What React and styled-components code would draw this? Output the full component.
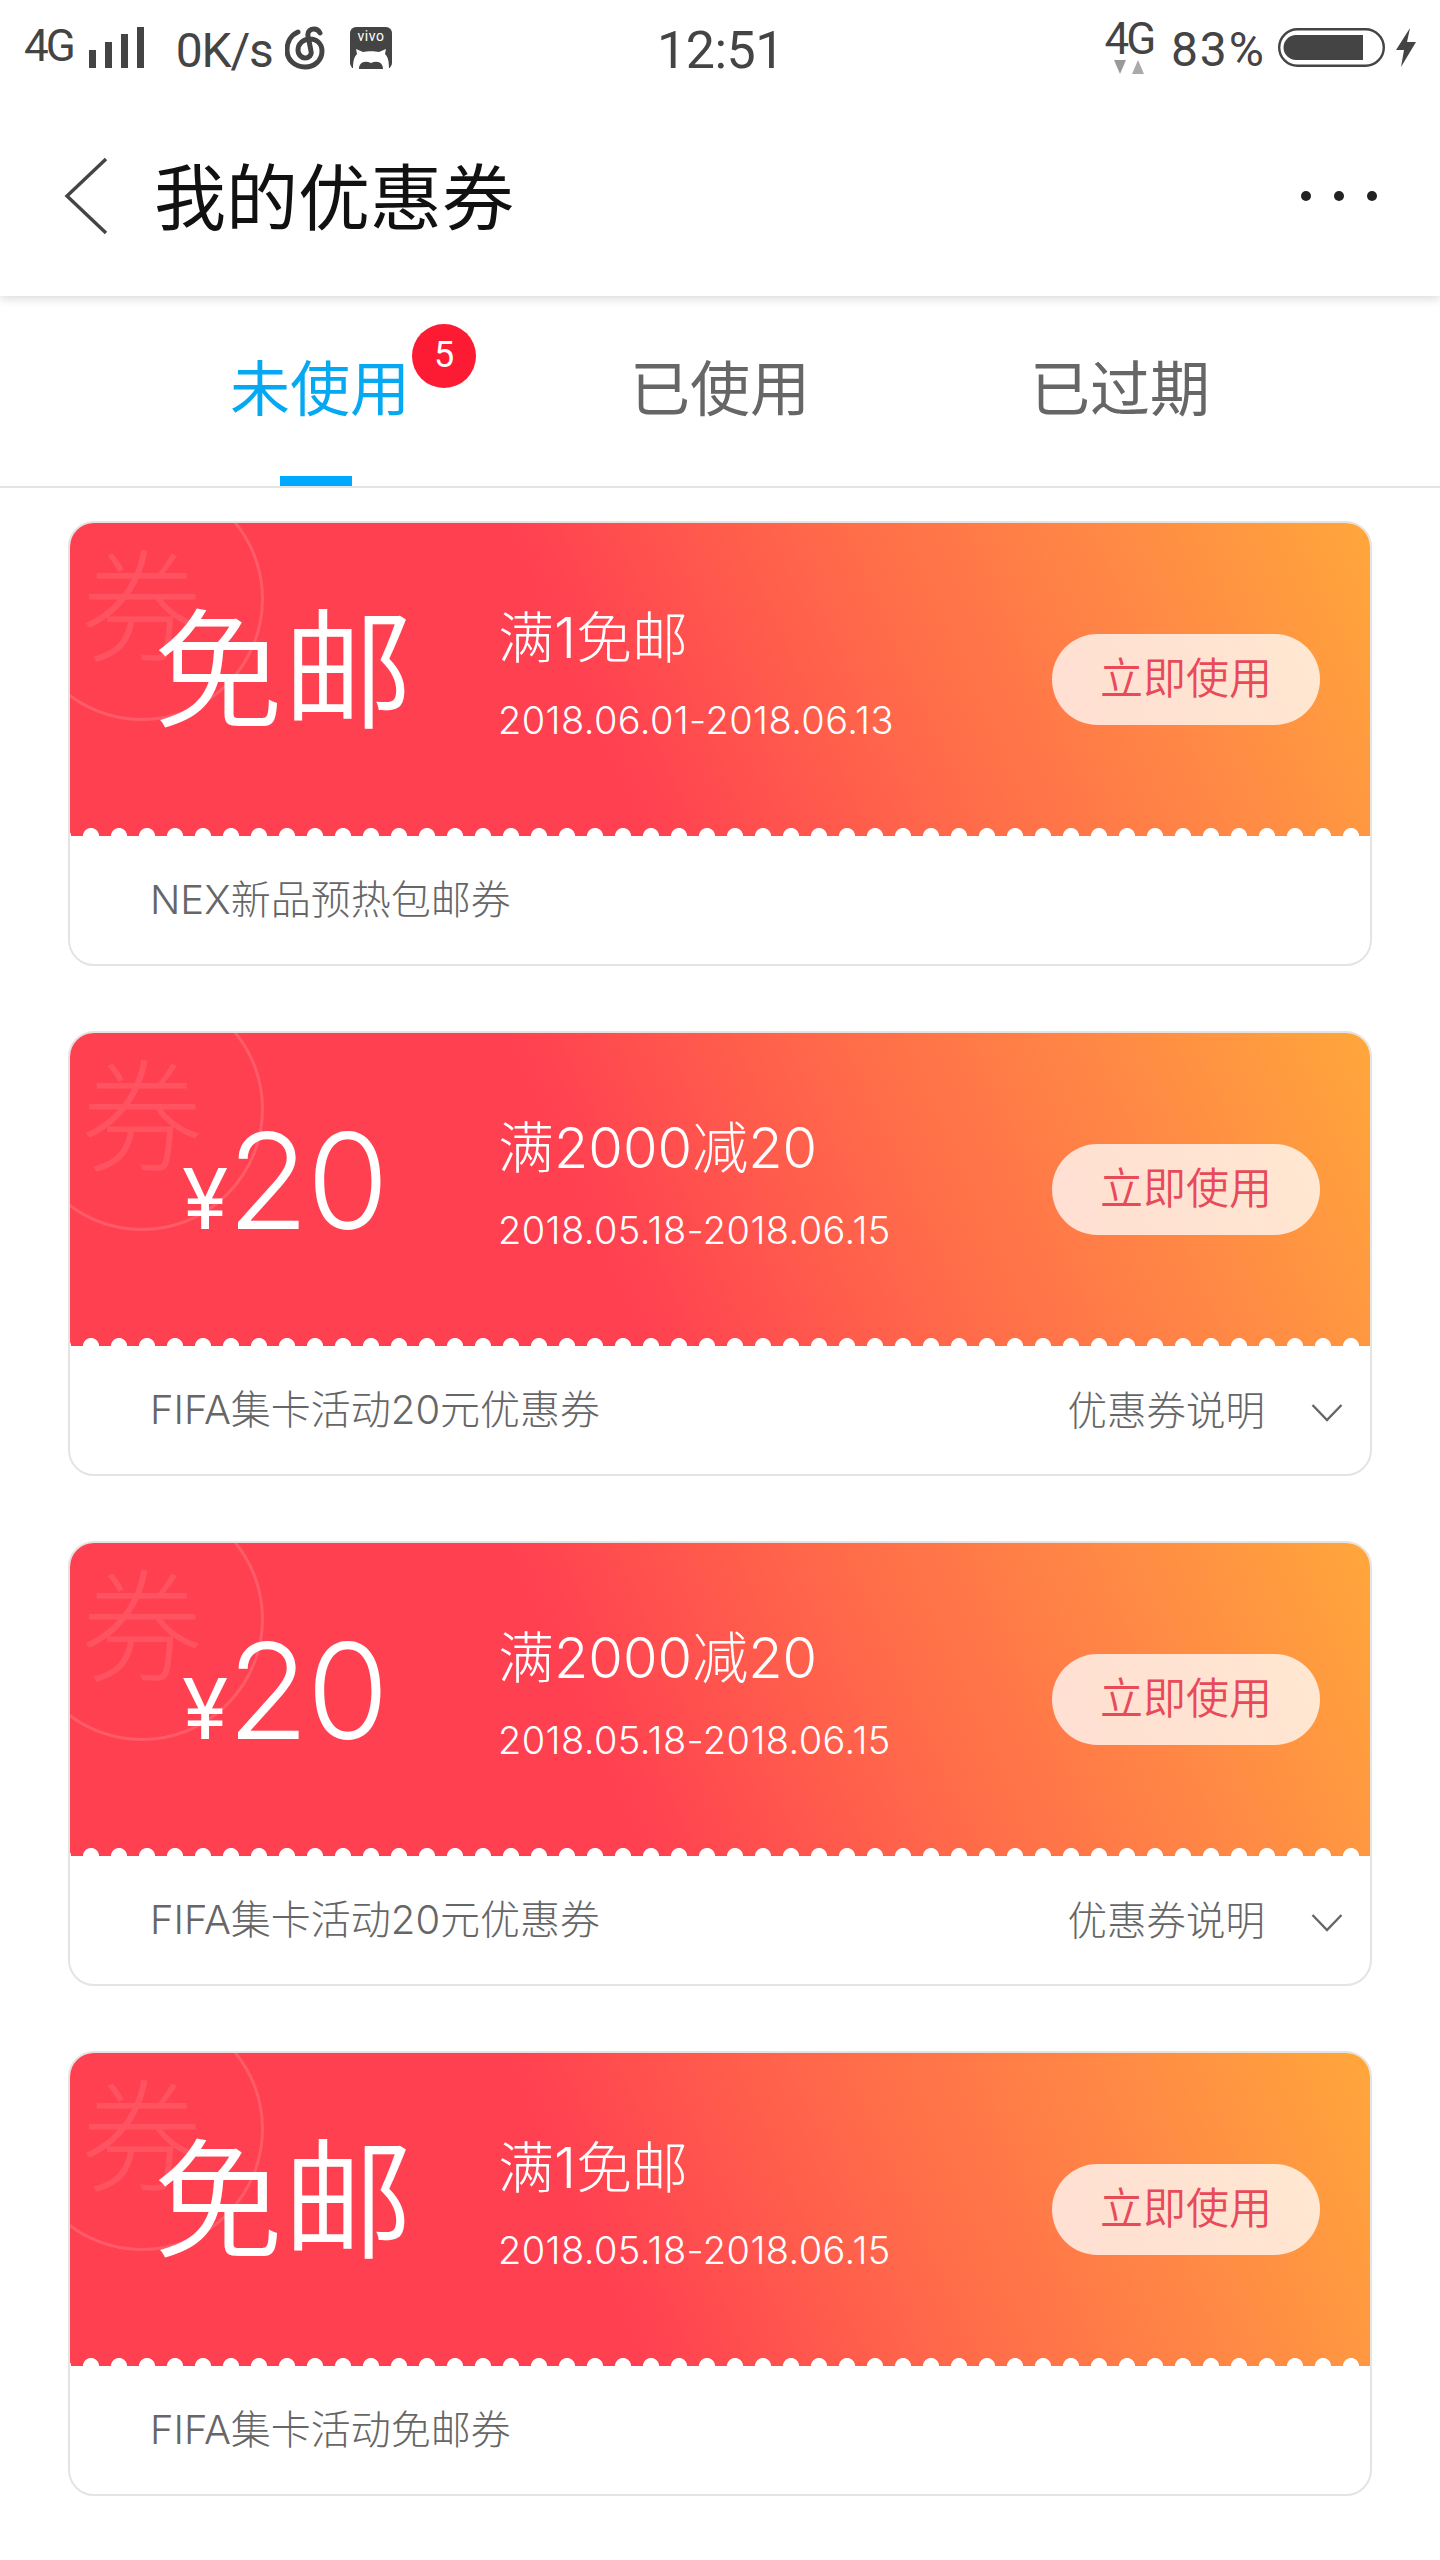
import React from 'react';
import styled, { createGlobalStyle } from 'styled-components';

const GlobalStyle = createGlobalStyle`
  html, body { margin: 0; padding: 0; background: #fff; }
  body { font-family: Roboto, "Noto Sans CJK SC", sans-serif; }
`;

const Page = styled.div`
  width: 1440px;
  height: 2560px;
  overflow: hidden;
  background: #fff;
`;

const Header = styled.header`
  position: relative;
  height: 296px;
  background: #fff;
  box-shadow: 0 3px 9px rgba(0, 0, 0, 0.14);
`;

const StatusBar = styled.div`
  height: 96px;
  padding: 0 23px 0 24px;
  display: grid;
  grid-template-columns: 1fr auto 1fr;
  align-items: start;
  color: #444;
`;

const StatusLeft = styled.div`
  display: flex;
  align-items: flex-start;
`;

const StatusRight = styled.div`
  display: flex;
  justify-content: flex-end;
  align-items: flex-start;
`;

const NetType = styled.span`
  font-size: 44px;
  line-height: 44px;
  letter-spacing: -3px;
  margin-top: ${p => p.$top}px;
`;

const Speed = styled.span`
  font-size: 48px;
  line-height: 48px;
  letter-spacing: -1.2px;
  margin: 27px 0 0 ${p => p.$left}px;
`;

const Clock = styled.span`
  font-size: 52px;
  line-height: 52px;
  letter-spacing: -0.5px;
  margin-top: 25px;
`;

const Percent = styled.span`
  font-size: 48px;
  line-height: 46px;
  letter-spacing: 2px;
  margin: 27px 12px 0 17px;
`;

const NetStack = styled.div`
  display: flex;
  flex-direction: column;
  align-items: center;
  width: 50px;
`;

const StatusIcon = styled.svg`
  display: block;
  flex: none;
  margin: ${p => p.$margin};
`;

const Nav = styled.div`
  height: 200px;
  padding: 0 63px 0 64px;
  display: flex;
  align-items: center;
`;

const BackIcon = styled.svg`
  display: block;
  margin: 0 46px 0 0;
`;

const Title = styled.h1`
  flex: 1;
  margin: 8px 0 0;
  font-size: 72px;
  line-height: 80px;
  font-weight: 400;
  color: #111;
`;

const Dots = styled.div`
  display: flex;
  gap: 23px;
`;

const Dot = styled.i`
  display: block;
  width: 10px;
  height: 10px;
  border-radius: 50%;
  background: #222;
`;

const Tabs = styled.nav`
  height: 190px;
  display: flex;
  justify-content: center;
  border-bottom: 2px solid #e4e4e4;
  box-sizing: content-box;
`;

const Tab = styled.div`
  position: relative;
  width: ${p => p.$width}px;
  padding-top: 57px;
  text-align: center;
  font-size: 60px;
  line-height: 76px;
  color: ${p => (p.$active ? '#06a8f2' : '#666')};
  ${p => p.$active && `
    &::after {
      content: '';
      position: absolute;
      left: 50%;
      bottom: 0;
      width: 72px;
      height: 10px;
      margin-left: -40px;
      background: #00a9ff;
    }
  `}
`;

const Badge = styled.span`
  position: absolute;
  left: 292px;
  top: 28px;
  width: 64px;
  height: 64px;
  border-radius: 50%;
  background: #fc1b32;
  color: #fff;
  font-family: Roboto, sans-serif;
  font-size: 36px;
  line-height: 62px;
  text-align: center;
`;

const List = styled.main`
  padding: 33px 68px 0;
  display: flex;
  flex-direction: column;
  gap: 65px;
`;

const Card = styled.article`
  height: 445px;
  box-sizing: border-box;
  border: 2px solid #e6e4e3;
  border-radius: 26px;
  overflow: hidden;
  display: flex;
  flex-direction: column;
  background: #fff;
  font-family: Inter, "Noto Sans CJK SC", sans-serif;
`;

const Ticket = styled.div`
  position: relative;
  height: 313px;
  overflow: hidden;
  display: flex;
  flex-direction: column;
  background: linear-gradient(66deg, #ff4051 0%, #ff4051 40%, #ff6a4a 62%, #ff8a45 82%, #ffa73b 100%);
`;

const Ring = styled.div`
  position: absolute;
  left: -50px;
  top: -46px;
  width: 238px;
  height: 238px;
  border: 3px solid rgba(255, 255, 255, 0.14);
  border-radius: 50%;
  display: flex;
  align-items: center;
  justify-content: center;
  font-family: "Noto Sans CJK SC", sans-serif;
  font-size: 122px;
  line-height: 122px;
  font-weight: 300;
  color: rgba(255, 255, 255, 0.1);
`;

const TicketBody = styled.div`
  position: relative;
  flex: 1;
  display: flex;
  align-items: center;
  padding: 0 50px 0 0;
`;

const Amount = styled.div`
  width: 426px;
  margin-right: 2px;
  padding-bottom: 9px;
  display: flex;
  justify-content: center;
  align-items: baseline;
  color: #fff;
  font-weight: 300;
`;

const FreeLabel = styled.span`
  font-size: 130px;
  line-height: 150px;
  font-weight: 350;
`;

const Currency = styled.span`
  font-size: 84px;
  line-height: 1;
  font-weight: 400;
  margin: 0 -1px 0 3px;
`;

const Value = styled.span`
  font-size: 133px;
  line-height: 150px;
  letter-spacing: -2px;
`;

const Info = styled.div`
  flex: 1;
  color: #fff;
  padding-bottom: 4px;
`;

const Rule = styled.div`
  font-size: 56px;
  line-height: 64px;
  font-weight: 300;
`;

const Dates = styled.div`
  margin-top: 28px;
  font-size: 38px;
  line-height: 44px;
  font-weight: 300;
  letter-spacing: 0.4px;
  white-space: nowrap;
`;

const UseButton = styled.button`
  width: 268px;
  height: 91px;
  padding: 0 0 10px;
  border: 0;
  border-radius: 46px;
  background: rgba(255, 255, 255, 0.76);
  color: #e84a5a;
  font-family: "Noto Sans CJK SC", sans-serif;
  font-size: 43px;
  font-weight: 350;
  margin-top: 8px;
`;

const Scallops = styled.div`
  flex: none;
  height: 8px;
  background-image: radial-gradient(circle at 14px 8px, #fff 7.6px, transparent 8.4px);
  background-size: 28px 8px;
  background-position: 7px 0;
  background-repeat: repeat-x;
`;

const Footer = styled.div`
  flex: 1;
  display: flex;
  align-items: center;
  padding: 0 27px 6px 80px;
  color: #666;
  font-size: 40px;
  font-weight: 300;
`;

const FooterName = styled.span`
  flex: 1;
`;

const More = styled.span`
  font-size: 39.5px;
  margin-right: 46px;
`;

const Chevron = styled.svg`
  display: block;
  margin-top: 12px;
`;

const coupons = [
  { free: true, rule: '满1免邮', dates: '2018.06.01-2018.06.13', name: 'NEX新品预热包邮券' },
  { value: 20, rule: '满2000减20', dates: '2018.05.18-2018.06.15', name: 'FIFA集卡活动20元优惠券', more: true },
  { value: 20, rule: '满2000减20', dates: '2018.05.18-2018.06.15', name: 'FIFA集卡活动20元优惠券', more: true },
  { free: true, rule: '满1免邮', dates: '2018.05.18-2018.06.15', name: 'FIFA集卡活动免邮券' },
];

const Coupon = ({ coupon }) => (
  <Card>
    <Ticket>
      <Ring>券</Ring>
      <TicketBody>
        <Amount>
          {coupon.free ? (
            <FreeLabel>免邮</FreeLabel>
          ) : (
            <>
              <Currency>¥</Currency>
              <Value>{coupon.value}</Value>
            </>
          )}
        </Amount>
        <Info>
          <Rule>{coupon.rule}</Rule>
          <Dates>{coupon.dates}</Dates>
        </Info>
        <UseButton>立即使用</UseButton>
      </TicketBody>
      <Scallops />
    </Ticket>
    <Footer>
      <FooterName>{coupon.name}</FooterName>
      {coupon.more && (
        <>
          <More>优惠券说明</More>
          <Chevron width="32" height="20" viewBox="0 0 32 20">
            <path d="M1.5 2 L16 17 L30.5 2" fill="none" stroke="#666" strokeWidth="2.4" />
          </Chevron>
        </>
      )}
    </Footer>
  </Card>
);

export default function App() {
  return (
    <Page>
      <GlobalStyle />
      <Header>
        <StatusBar>
          <StatusLeft>
            <NetType $top={24}>4G</NetType>
            <StatusIcon $margin="27px 0 0 16px" width="55" height="41" viewBox="0 0 55 41" fill="#444">
              <rect x="0" y="23" width="7" height="18" />
              <rect x="16" y="15" width="7" height="26" />
              <rect x="32" y="7" width="7" height="34" />
              <rect x="48" y="0" width="7" height="41" />
            </StatusIcon>
            <Speed $left={32}>0K/s</Speed>
            <StatusIcon $margin="26px 0 0 12px" width="40" height="44" viewBox="0 0 40 44">
              <path
                d="M13 6 C6 9 2 16 2 24 C2 34 10 41 20 41 C30 41 37 34 37 25 C37 17 31 13 25 13 C18 13 13 18 13 24 C13 29 17 32 20 32 C24 32 27 29 26 25 L23 10 C22 5 26 3 29 3 C32 3 34 5 35 7"
                fill="none"
                stroke="#444"
                strokeWidth="5"
                strokeLinecap="round"
              />
            </StatusIcon>
            <StatusIcon $margin="27px 0 0 25px" width="42" height="42" viewBox="0 0 42 42">
              <rect width="42" height="42" rx="6" fill="#444" />
              <text x="21" y="14" textAnchor="middle" fontFamily="Roboto, sans-serif" fontSize="14" letterSpacing="0.5" fill="#fff">vivo</text>
              <path d="M3 42 C3 34 4 30 7 27 L6 22 L13 25 C17 24 25 24 29 25 L36 22 L35 27 C38 30 39 34 39 42 Z" fill="#fff" />
              <path d="M9 42 C9 36 14 33 21 36 C28 33 33 36 33 42 Z" fill="#444" />
            </StatusIcon>
          </StatusLeft>
          <Clock>12:51</Clock>
          <StatusRight>
            <NetStack>
              <NetType $top={17}>4G</NetType>
              <StatusIcon $margin="-1px 0 0 0" width="32" height="14" viewBox="0 0 32 14">
                <path d="M1 0 H13 L7 14 Z" fill="#999" />
                <path d="M25 0 L31 14 H19 Z" fill="#aaa" />
              </StatusIcon>
            </NetStack>
            <Percent>83%</Percent>
            <StatusIcon $margin="28px 0 0 0" width="107" height="39" viewBox="0 0 107 39">
              <rect x="1.2" y="1.2" width="104.6" height="36.6" rx="18.3" fill="#fff" stroke="#444" strokeWidth="2.4" />
              <path d="M18 7 H85 V32 H18 A12.5 12.5 0 0 1 18 7 Z" fill="#444" />
            </StatusIcon>
            <StatusIcon $margin="28px 0 0 10px" width="22" height="39" viewBox="0 0 22 39">
              <path d="M15 0 L1 22 H9 L6 39 L21 14 H12 Z" fill="#444" />
            </StatusIcon>
          </StatusRight>
        </StatusBar>
        <Nav>
          <BackIcon width="44" height="78" viewBox="0 0 44 78">
            <path d="M42 2 L3 39 L42 76" fill="none" stroke="#444" strokeWidth="3.4" />
          </BackIcon>
          <Title>我的优惠券</Title>
          <Dots>
            <Dot />
            <Dot />
            <Dot />
          </Dots>
        </Nav>
      </Header>
      <Tabs>
        <Tab $active $width={400}>
          未使用
          <Badge>5</Badge>
        </Tab>
        <Tab $width={400}>已使用</Tab>
        <Tab $width={400}>已过期</Tab>
      </Tabs>
      <List>
        {coupons.map((c, i) => (
          <Coupon key={i} coupon={c} />
        ))}
      </List>
    </Page>
  );
}
